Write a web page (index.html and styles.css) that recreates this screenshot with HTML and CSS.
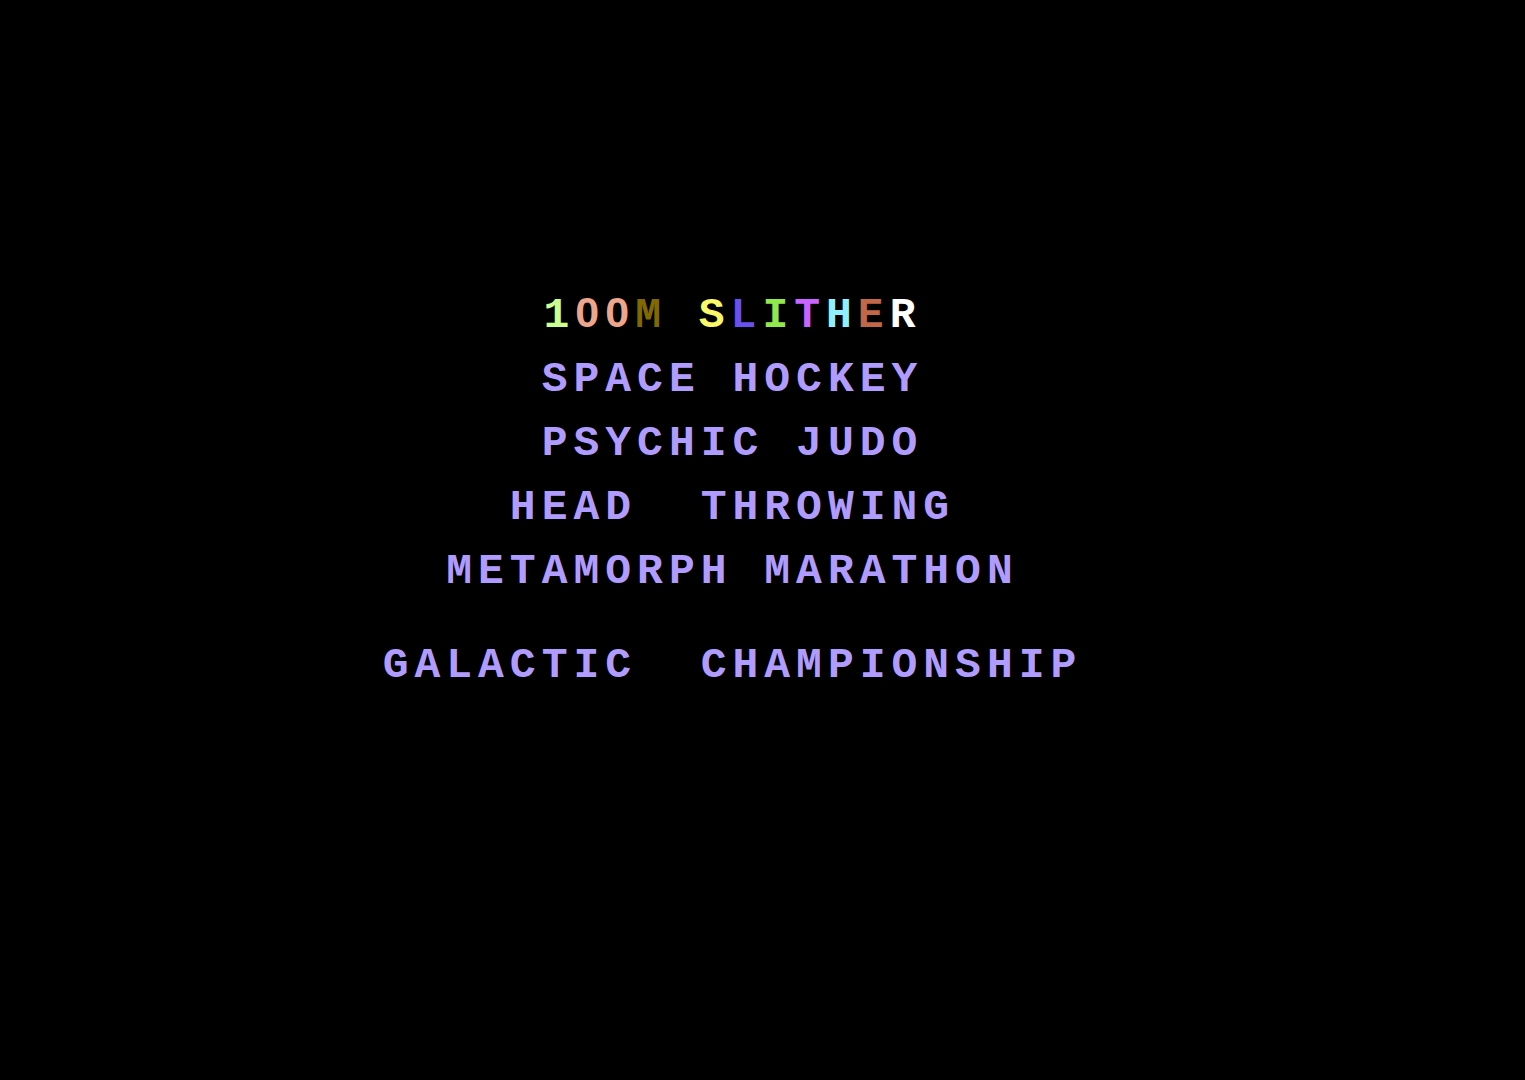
FILE: index.html
```
<!DOCTYPE html>
<html lang="en">
<head>
  <meta charset="UTF-8">
  <meta name="viewport" content="width=device-width, initial-scale=1.0">
  <title>Galactic Championship</title>
  <link rel="stylesheet" href="styles.css">
</head>
<body>
  <main class="screen">
    <ul class="events">
      <li><button class="event" type="button"><span class="lime">1</span><span class="peach zero">0</span><span class="peach zero">0</span><span class="brown">M</span> <span class="yellow">S</span><span class="blue">L</span><span class="green">I</span><span class="purple">T</span><span class="cyan">H</span><span class="red">E</span><span class="white">R</span></button></li>
      <li><button class="event" type="button">SPACE HOCKEY</button></li>
      <li><button class="event" type="button">PSYCHIC JUDO</button></li>
      <li><button class="event" type="button">HEAD  THROWING</button></li>
      <li><button class="event" type="button">METAMORPH MARATHON</button></li>
      <li class="championship"><button class="event" type="button">GALACTIC  CHAMPIONSHIP</button></li>
    </ul>
  </main>
</body>
</html>
```

FILE: styles.css
```
:root {
  --background: #000000;
  --text: #b09cff;
}

* {
  margin: 0;
  padding: 0;
  box-sizing: border-box;
}

body {
  background-color: var(--background);
  color: var(--text);
  font-family: "Liberation Mono", monospace;
  min-height: 100vh;
}

.screen {
  padding: 280px 60px 64px 0;
}

.events {
  list-style: none;
  display: flex;
  flex-direction: column;
  align-items: center;
}

.event {
  display: block;
  border: none;
  background: none;
  color: inherit;
  font-family: inherit;
  font-size: 43px;
  font-weight: bold;
  line-height: 64px;
  letter-spacing: 6px;
  white-space: pre;
  cursor: pointer;
}

.championship {
  margin-top: 30px;
}

/* open zero, without the dot */
.zero {
  font-family: "Liberation Sans", sans-serif;
}

.lime {
  color: #ccff90;
}

.peach {
  color: #eda68c;
}

.brown {
  color: #806a00;
}

.yellow {
  color: #f8f868;
}

.blue {
  color: #6a50f0;
}

.green {
  color: #90e84c;
}

.purple {
  color: #c864ff;
}

.cyan {
  color: #90f0ff;
}

.red {
  color: #c06848;
}

.white {
  color: #ffffff;
}
```
